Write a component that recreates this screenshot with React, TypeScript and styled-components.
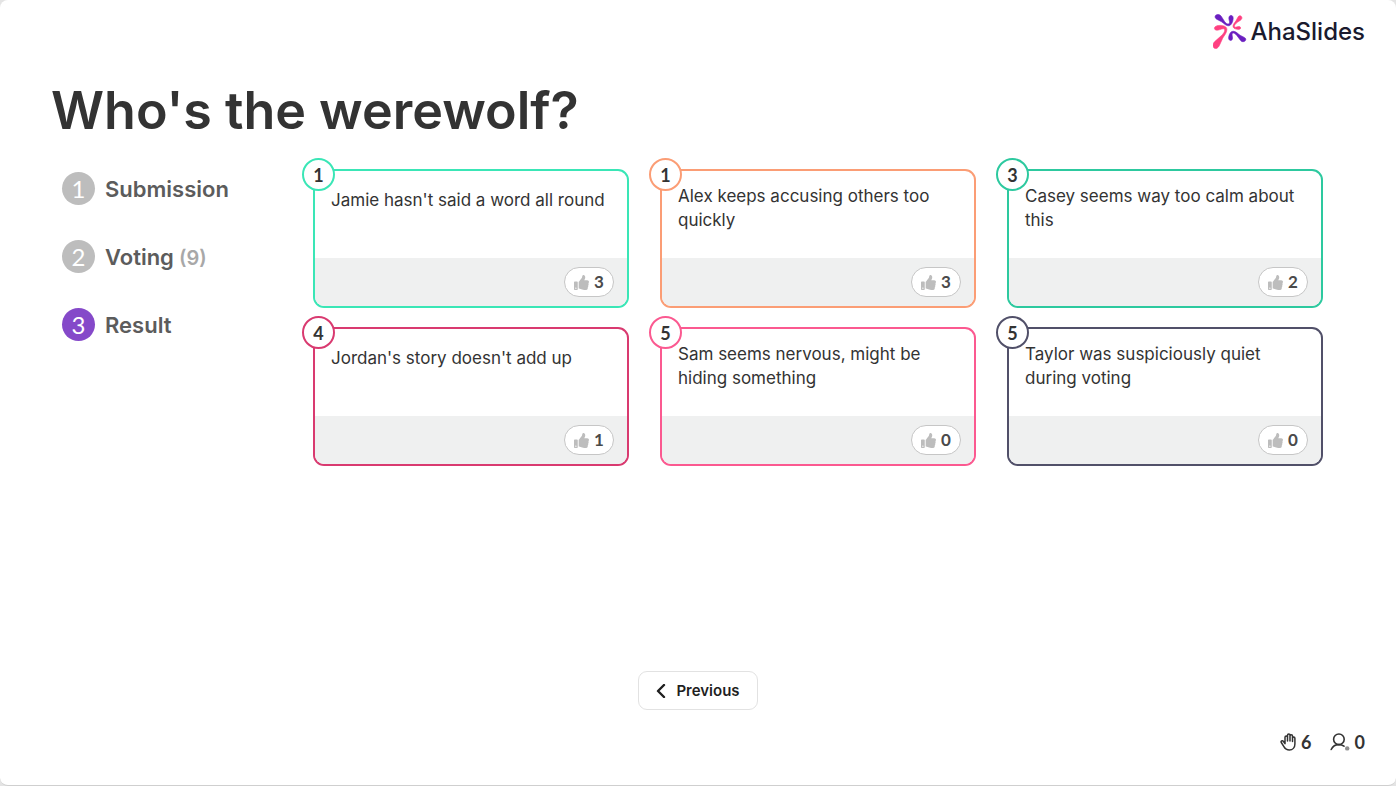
import React from 'react';
import styled, { createGlobalStyle } from 'styled-components';
import { FaThumbsUp } from 'react-icons/fa';

const GlobalStyle = createGlobalStyle`
  * { box-sizing: border-box; }
  body {
    margin: 0;
    background: #e4e4e4;
    color: #333333;
    font-family: Inter, 'Liberation Sans', sans-serif;
  }
`;

const Page = styled.div`
  display: flex;
  flex-direction: column;
  min-height: 100vh;
  background: #ffffff;
  border-bottom: 1px solid #cfcfcf;
  border-radius: 8px;
`;

const Header = styled.header`
  display: flex;
  justify-content: flex-end;
  padding: 14px 31px 0;
`;

const Brand = styled.a`
  display: flex;
  align-items: center;
  gap: 3px;
  height: 35px;
  color: #1a1a2e;
  font-size: 24px;
  font-weight: 500;
  line-height: 36px;
  text-decoration: none;
`;

const Title = styled.h1`
  margin: 30px 51px 26px;
  color: #333333;
  font-size: 52px;
  font-weight: 600;
  line-height: 64px;
`;

const Main = styled.main`
  display: flex;
  flex: 1;
  align-items: flex-start;
  padding: 0 73px 24px 62px;
`;

const Steps = styled.ol`
  display: flex;
  flex: 0 0 251px;
  flex-direction: column;
  gap: 35px;
  margin: 0;
  padding: 3px 0 0;
  list-style: none;
`;

const Step = styled.li`
  display: flex;
  align-items: center;
  gap: 10px;
  height: 33px;
  color: #5c5c5c;
  font-size: 22px;
  font-weight: 600;
  white-space: nowrap;
`;

const StepNumber = styled.span<{ $active: boolean }>`
  display: grid;
  place-items: center;
  width: 33px;
  height: 33px;
  border-radius: 50%;
  background: ${({ $active }) => ($active ? '#8549c9' : '#bdbdbd')};
  color: #ffffff;
  font-family: Lato, sans-serif;
  font-size: 24px;
  font-weight: 400;
  line-height: 32px;
`;

const StepCount = styled.span`
  color: #a8a8a8;
  font-size: 20px;
`;

const CardGrid = styled.div`
  display: grid;
  flex: 1;
  grid-template-columns: repeat(3, 1fr);
  gap: 19px 31px;
`;

const Card = styled.article<{ $accent: string }>`
  position: relative;
  display: flex;
  flex-direction: column;
  min-height: 139px;
  border: 2px solid ${({ $accent }) => $accent};
  border-radius: 11px;
`;

const Rank = styled.span<{ $accent: string }>`
  position: absolute;
  top: -13px;
  left: -13px;
  display: grid;
  place-items: center;
  width: 33px;
  height: 33px;
  border: 2px solid ${({ $accent }) => $accent};
  border-radius: 50%;
  background: #ffffff;
  font-family: Lato, sans-serif;
  font-size: 18px;
  font-weight: 700;
  line-height: 28px;
`;

const CardBody = styled.div`
  display: flex;
  flex: 1;
  align-items: flex-start;
  padding: 13px 12px 8px 16px;
`;

const CardText = styled.p`
  display: flex;
  align-items: center;
  min-height: 32px;
  margin: 0;
  font-size: 17px;
  line-height: 24px;
`;

const CardFooter = styled.footer`
  display: flex;
  align-items: center;
  justify-content: flex-end;
  height: 48px;
  padding: 0 13px;
  border-radius: 0 0 9px 9px;
  background: #eff0f0;
`;

const VoteButton = styled.button`
  display: flex;
  align-items: center;
  justify-content: center;
  gap: 5px;
  width: 50px;
  height: 30px;
  padding: 0;
  border: 1px solid #c6c6c6;
  border-radius: 15px;
  background: #ffffff;
  color: #4a4a4a;
  font-family: Lato, sans-serif;
  font-size: 17px;
  font-weight: 700;
  line-height: 28px;

  svg { color: #bdbdbd; }
`;

const Footer = styled.footer`
  display: flex;
  flex-direction: column;
  align-items: center;
  gap: 22px;
  padding-bottom: 33px;
`;

const PreviousButton = styled.button`
  display: flex;
  align-items: center;
  justify-content: center;
  gap: 10px;
  width: 120px;
  height: 39px;
  padding: 0;
  border: 1px solid #e2e2e2;
  border-radius: 9px;
  background: #ffffff;
  color: #1f1f1f;
  font-family: inherit;
  font-size: 15px;
  font-weight: 600;
`;

const Stats = styled.div`
  display: flex;
  gap: 18px;
  align-self: flex-end;
  padding-right: 31px;
`;

const Stat = styled.span`
  display: flex;
  align-items: center;
  gap: 5px;
  height: 20px;
  font-family: Lato, sans-serif;
  font-size: 18px;
  font-weight: 700;
  line-height: 20px;
`;

function LogoMark() {
  return (
    <svg width="34" height="35" viewBox="0 0 34 35" aria-hidden="true">
      <g fill="#6a1fc0" stroke="#6a1fc0" strokeWidth="0.6">
        <path d="M2.8 1.2C4.4-.1 6.8.2 8.2 2.2L11.4 7.3C12.6 9 14 10.2 15.3 10C16.7 9.7 16.8 8.2 16.2 6.3C15.5 4 15.8 1.7 17.8 1.4C20 1.2 20.5 3.5 20 5.8C19.3 9.4 17.7 12 15.1 11.8C12.7 11.6 10.8 9.4 8.6 7.8L3.7 5.2C2 4.2 1.5 2.3 2.8 1.2Z" />
        <path d="M32.2 26.8C31 28.2 28.7 28 27.4 26.2L24 21.7C22.7 20 21.2 18.8 20.1 19C18.9 19.2 18.9 20.6 19.3 22.2C19.9 24.5 19.3 26.5 17.6 26.5C15.7 26.4 15.3 24.3 15.8 22.3C16.6 18.8 18.4 17 20.7 17.3C23.1 17.6 25 19.8 27 21.2L31.3 23.4C32.9 24.2 33.3 25.7 32.2 26.8Z" />
      </g>
      <g fill="#ff4081" stroke="#ff4081" strokeWidth="0.6">
        <path d="M28.2 2.3C29.5 3.4 29 5.2 27.5 6.2L24.7 8.1C22.8 9.5 21.2 11.3 21.4 12.5C21.6 13.5 22.9 13.2 24.3 12.8C26 12.3 27.6 12.6 27.6 14C27.6 15.4 25.9 15.6 24.2 15.3C21.5 14.9 19.8 13.8 20 12C20.1 10.2 21.9 8.6 23 6.8L24.9 3.2C25.7 1.8 27.2 1.4 28.2 2.3Z" />
        <path d="M1.1 34C-.8 32.3-.1 29.5 1.7 27.6L8.2 21.8C10.2 20 12 17.5 11.7 15.8C11.4 14.2 9.4 14.7 6.9 15.6C4.3 16.6 1.5 16.5 1.4 14.3C1.5 12.2 4.3 11.4 7 11.4C11 11.4 14 12.8 13.9 15.6C13.9 18.7 11.4 21.3 9.7 24.2L6.4 31.4C5.2 34 2.8 35.4 1.1 34Z" />
      </g>
    </svg>
  );
}

function ChevronLeft() {
  return (
    <svg width="10" height="14" viewBox="0 0 10 14" fill="none" aria-hidden="true">
      <path d="M8 1 2 7l6 6" stroke="currentColor" strokeWidth="2.4" strokeLinecap="round" strokeLinejoin="round" />
    </svg>
  );
}

function RaisedHand() {
  return (
    <svg width="16" height="18" viewBox="0 0 16 18" fill="none" aria-hidden="true">
      <path
        d="M5 10.6V4.2a1.2 1.2 0 0 1 2.5 0V8M7.5 8V2.2a1.25 1.25 0 0 1 2.5 0V8M10 8V2.9a1.25 1.25 0 0 1 2.5 0V8.6M12.5 5.2a1.2 1.2 0 0 1 2.4 0V11C14.9 14.6 12.6 17 9.4 17C6.6 17 5.1 15.8 3.9 13.6L1.3 9.5C.5 8.2 2.3 7.1 3.3 8.2L5 10.6"
        stroke="currentColor"
        strokeWidth="1.5"
        strokeLinecap="round"
        strokeLinejoin="round"
      />
    </svg>
  );
}

function Participant() {
  return (
    <svg width="20" height="18" viewBox="0 0 20 18" fill="none" aria-hidden="true">
      <g stroke="currentColor" strokeWidth="1.6" strokeLinecap="round">
        <circle cx="8.9" cy="6.3" r="5.3" />
        <path d="M1.2 16.5C2.7 13.3 5.5 11.6 8.9 11.6C10.9 11.6 12.7 12.2 14 13.2" />
      </g>
      <circle cx="17.2" cy="15.4" r="2.2" fill="#8f8f8f" />
    </svg>
  );
}

const steps = [
  { label: 'Submission' },
  { label: 'Voting', count: 9 },
  { label: 'Result', active: true },
];

const ideas = [
  { rank: 1, votes: 3, accent: '#3ae6b6', text: "Jamie hasn't said a word all round" },
  { rank: 1, votes: 3, accent: '#fb9d75', text: 'Alex keeps accusing others too quickly' },
  { rank: 3, votes: 2, accent: '#2dc99f', text: 'Casey seems way too calm about this' },
  { rank: 4, votes: 1, accent: '#d93a70', text: "Jordan's story doesn't add up" },
  { rank: 5, votes: 0, accent: '#fb5990', text: 'Sam seems nervous, might be hiding something' },
  { rank: 5, votes: 0, accent: '#515069', text: 'Taylor was suspiciously quiet during voting' },
];

export default function App() {
  return (
    <>
      <GlobalStyle />
      <Page>
        <Header>
          <Brand href="#">
            <LogoMark />
            AhaSlides
          </Brand>
        </Header>
        <Title>Who's the werewolf?</Title>
        <Main>
          <Steps>
            {steps.map((step, i) => (
              <Step key={step.label} aria-current={step.active ? 'step' : undefined}>
                <StepNumber $active={!!step.active}>{i + 1}</StepNumber>
                <span>
                  {step.label}
                  {step.count !== undefined && <StepCount> ({step.count})</StepCount>}
                </span>
              </Step>
            ))}
          </Steps>
          <CardGrid>
            {ideas.map((idea) => (
              <Card key={idea.text} $accent={idea.accent}>
                <Rank $accent={idea.accent}>{idea.rank}</Rank>
                <CardBody>
                  <CardText>{idea.text}</CardText>
                </CardBody>
                <CardFooter>
                  <VoteButton type="button">
                    <FaThumbsUp size={15} />
                    {idea.votes}
                  </VoteButton>
                </CardFooter>
              </Card>
            ))}
          </CardGrid>
        </Main>
        <Footer>
          <PreviousButton type="button">
            <ChevronLeft />
            Previous
          </PreviousButton>
          <Stats>
            <Stat>
              <RaisedHand />6
            </Stat>
            <Stat>
              <Participant />0
            </Stat>
          </Stats>
        </Footer>
      </Page>
    </>
  );
}
